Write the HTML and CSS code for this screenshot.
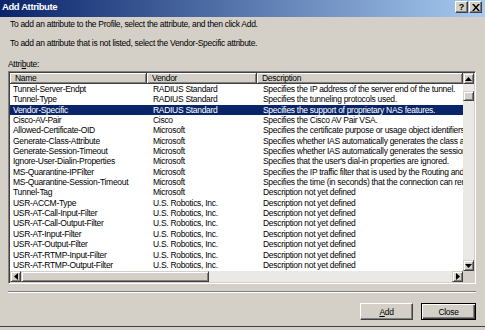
FILE: index.html
```html
<!DOCTYPE html>
<html lang="en">
<head>
    <meta charset="UTF-8">
    <title>Add Attribute</title>
    <link rel="stylesheet" href="styles.css">
</head>
<body>
    <div class="window">
        <div class="titlebar">
            <span class="title">Add Attribute</span>
            <div class="caption-btns">
                <span class="cap-btn">?</span>
                <span class="cap-btn">
                    <svg width="8" height="7" viewBox="0 0 8 7"><path d="M0 0h2l2 2.5L6 0h2L5 3.5 8 7H6L4 4.5 2 7H0l3-3.5z" fill="#000"/></svg>
                </span>
            </div>
        </div>
        <div class="content">
            <p class="hint">To add an attribute to the Profile, select the attribute, and then click Add.</p>
            <p class="hint">To add an attribute that is not listed, select the Vendor-Specific attribute.</p>
            <div class="field-label">Attri<u>b</u>ute:</div>

            <div class="listview">
                <div class="list-main">
                    <div class="list-cols">
                        <div class="list-header">
                            <div class="col-head">Name</div>
                            <div class="col-head">Vendor</div>
                            <div class="col-head">Description</div>
                        </div>
                        <div id="rows" class="list-rows"></div>
                    </div>
                    <div class="vscroll">
                        <div class="sb-btn"><svg width="7" height="4" viewBox="0 0 7 4"><path d="M3.5 0L7 4H0z"/></svg></div>
                        <div class="sb-track-v"><div class="sb-thumb-v"></div></div>
                        <div class="sb-btn"><svg width="7" height="4" viewBox="0 0 7 4"><path d="M0 0h7L3.5 4z"/></svg></div>
                    </div>
                </div>
                <div class="list-bottom">
                    <div class="hscroll">
                        <div class="sb-btn"><svg width="4" height="7" viewBox="0 0 4 7"><path d="M0 3.5L4 0v7z"/></svg></div>
                        <div class="sb-track-h"><div class="sb-thumb-h"></div></div>
                        <div class="sb-btn"><svg width="4" height="7" viewBox="0 0 4 7"><path d="M0 0l4 3.5L0 7z"/></svg></div>
                    </div>
                    <div class="sb-corner"></div>
                </div>
            </div>

            <div class="separator"></div>

            <div class="actions">
                <button class="btn"><u>A</u>dd</button>
                <button class="btn btn-default">Close</button>
            </div>
        </div>
    </div>

    <script>
const attributes = [
    ["Tunnel-Server-Endpt", "RADIUS Standard", "Specifies the IP address of the server end of the tunnel."],
    ["Tunnel-Type", "RADIUS Standard", "Specifies the tunneling protocols used."],
    ["Vendor-Specific", "RADIUS Standard", "Specifies the support of proprietary NAS features."],
    ["Cisco-AV-Pair", "Cisco", "Specifies the Cisco AV Pair VSA."],
    ["Allowed-Certificate-OID", "Microsoft", "Specifies the certificate purpose or usage object identifiers"],
    ["Generate-Class-Attribute", "Microsoft", "Specifies whether IAS automatically generates the class attribute"],
    ["Generate-Session-Timeout", "Microsoft", "Specifies whether IAS automatically generates the session timeout"],
    ["Ignore-User-Dialin-Properties", "Microsoft", "Specifies that the user's dial-in properties are ignored."],
    ["MS-Quarantine-IPFilter", "Microsoft", "Specifies the IP traffic filter that is used by the Routing and Remote Access"],
    ["MS-Quarantine-Session-Timeout", "Microsoft", "Specifies the time (in seconds) that the connection can remain"],
    ["Tunnel-Tag", "Microsoft", "Description not yet defined"],
    ["USR-ACCM-Type", "U.S. Robotics, Inc.", "Description not yet defined"],
    ["USR-AT-Call-Input-Filter", "U.S. Robotics, Inc.", "Description not yet defined"],
    ["USR-AT-Call-Output-Filter", "U.S. Robotics, Inc.", "Description not yet defined"],
    ["USR-AT-Input-Filter", "U.S. Robotics, Inc.", "Description not yet defined"],
    ["USR-AT-Output-Filter", "U.S. Robotics, Inc.", "Description not yet defined"],
    ["USR-AT-RTMP-Input-Filter", "U.S. Robotics, Inc.", "Description not yet defined"],
    ["USR-AT-RTMP-Output-Filter", "U.S. Robotics, Inc.", "Description not yet defined"]
];

// Build the list rows, "Vendor-Specific" is the selected one
const rowsBox = document.getElementById("rows");
attributes.forEach(attr => {
    const row = document.createElement("div");
    row.className = "list-row";
    if (attr[0] === "Vendor-Specific") row.classList.add("selected");
    attr.forEach(text => {
        const cell = document.createElement("div");
        cell.className = "cell";
        cell.textContent = text;
        row.appendChild(cell);
    });
    rowsBox.appendChild(row);
});
    </script>
</body>
</html>
```

FILE: styles.css
```css
body {
    margin: 0;
    background: #d4d0c8;
    font-family: "Liberation Sans", Arial, sans-serif;
    font-size: 8.5px;
    letter-spacing: -0.3px;
    color: #000;
}
.window {
    width: 485px;
    height: 326px;
    background: #d4d0c8;
    border-bottom: 1px solid #404040;
}
.titlebar {
    height: 17px;
    display: flex;
    align-items: flex-start;
    justify-content: space-between;
    background: linear-gradient(to right, #0a246a, #a6caf0);
}
.title {
    color: #fff;
    font-weight: bold;
    font-size: 9.5px;
    letter-spacing: -0.4px;
    line-height: 13px;
    padding-left: 2px;
}
.caption-btns {
    display: flex;
    gap: 1px;
    padding-right: 3px;
    padding-top: 1px;
}
.cap-btn {
    width: 11px;
    height: 10px;
    display: flex;
    align-items: center;
    justify-content: center;
    background: #d4d0c8;
    font-weight: bold;
    font-size: 9px;
    letter-spacing: 0;
    border: 1px solid;
    border-color: #fff #404040 #404040 #fff;
    box-shadow: inset -1px -1px #808080;
}
.content {
    padding: 0 9px 0 8px;
}
.hint {
    margin: 0;
    line-height: 11px;
    padding-left: 2px;
}
.hint:first-child {
    padding-top: 2px;
}
.hint + .hint {
    margin-top: 8px;
}
.field-label {
    margin-top: 10px;
    line-height: 11px;
}
.listview {
    margin-top: 1px;
    height: 209px;
    display: flex;
    flex-direction: column;
    border: 1px solid;
    border-color: #808080 #fff #fff #808080;
    box-shadow: inset 1px 1px #404040, inset -1px -1px #d4d0c8;
    padding: 1px;
    background: #fff;
}
.list-main {
    flex: 1;
    display: flex;
    min-height: 0;
}
.list-cols {
    flex: 1;
    overflow: hidden;
}
.list-header,
.list-row {
    display: grid;
    grid-template-columns: 137px 110px 1fr;
}
.list-header {
    height: 11px;
}
.col-head {
    background: #d4d0c8;
    border-right: 1px solid #404040;
    border-bottom: 1px solid #404040;
    box-shadow: inset 1px 1px #fff, inset -1px -1px #808080;
    line-height: 10px;
    padding-left: 5px;
    white-space: nowrap;
    overflow: hidden;
}
.list-row {
    height: 10.35px;
    line-height: 10.35px;
}
.cell {
    white-space: nowrap;
    overflow: hidden;
    padding-left: 6px;
}
.cell:first-child {
    padding-left: 3px;
}
.list-row.selected {
    background: #0a246a;
    color: #fff;
}
.vscroll {
    width: 11px;
    display: flex;
    flex-direction: column;
}
.sb-btn {
    flex: none;
    width: 11px;
    height: 11px;
    box-sizing: border-box;
    display: flex;
    align-items: center;
    justify-content: center;
    background: #d4d0c8;
    border: 1px solid;
    border-color: #d4d0c8 #404040 #404040 #d4d0c8;
    box-shadow: inset 1px 1px #fff, inset -1px -1px #808080;
}
.sb-track-v {
    flex: 1;
    background: #ebe9e5;
    padding-top: 7px;
}
.sb-thumb-v {
    height: 10px;
    box-sizing: border-box;
    background: #d4d0c8;
    border: 1px solid;
    border-color: #d4d0c8 #404040 #404040 #d4d0c8;
    box-shadow: inset 1px 1px #fff, inset -1px -1px #808080;
}
.list-bottom {
    height: 11px;
    display: flex;
}
.hscroll {
    flex: 1;
    display: flex;
}
.sb-track-h {
    flex: 1;
    background: #ebe9e5;
    display: flex;
}
.sb-thumb-h {
    width: 188px;
    box-sizing: border-box;
    background: #d4d0c8;
    border: 1px solid;
    border-color: #d4d0c8 #404040 #404040 #d4d0c8;
    box-shadow: inset 1px 1px #fff, inset -1px -1px #808080;
}
.sb-corner {
    width: 11px;
    background: #d4d0c8;
}
.separator {
    margin-top: 7px;
    border-top: 1px solid #808080;
    border-bottom: 1px solid #fff;
    height: 0;
}
.actions {
    display: flex;
    justify-content: flex-end;
    gap: 8px;
    margin-top: 10px;
}
.btn {
    width: 53px;
    height: 17px;
    padding: 0;
    font: inherit;
    letter-spacing: inherit;
    background: #d4d0c8;
    border: 1px solid;
    border-color: #fff #404040 #404040 #fff;
    box-shadow: inset -1px -1px #808080;
    color: #000;
}
.btn-default {
    width: 55px;
    border: 1px solid #000;
    box-shadow: inset 1px 1px #fff, inset -1px -1px #404040, inset -2px -2px #808080;
}
```
